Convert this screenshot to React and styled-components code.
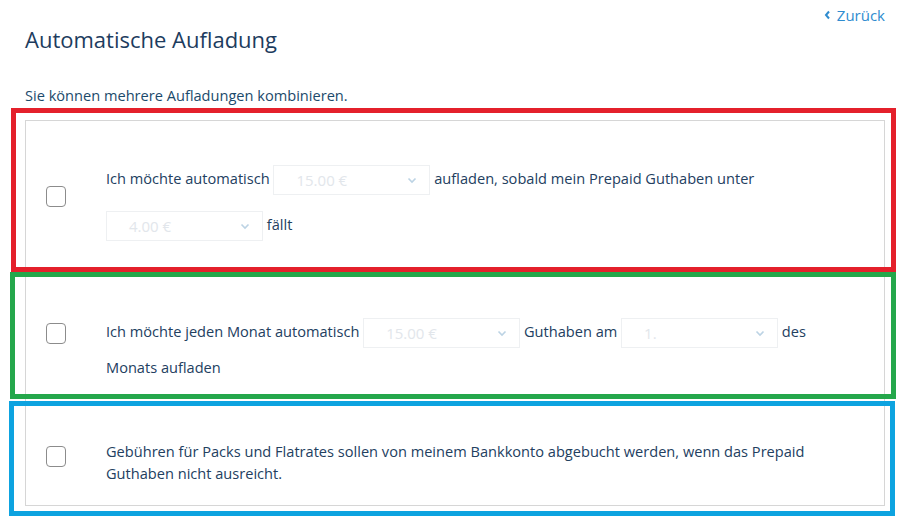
import React from 'react';
import styled, { createGlobalStyle } from 'styled-components';

const GlobalStyle = createGlobalStyle`
  body {
    margin: 0;
    background: #fff;
    font-family: "Open Sans", "Noto Sans", Arial, sans-serif;
  }
`;

const Page = styled.div`
  width: 907px;
  min-height: 521px;
  padding: 5px 22px 0 25px;
  box-sizing: border-box;
`;

const Header = styled.div`
  display: flex;
  justify-content: space-between;
  align-items: flex-start;
`;

const Title = styled.h1`
  margin: 19px 0 0;
  font-size: 22px;
  line-height: 30px;
  font-weight: 400;
  color: #1d3c5e;
`;

const BackLink = styled.a`
  display: flex;
  align-items: center;
  gap: 6px;
  font-size: 15px;
  line-height: 20px;
  color: #2f8ccf;
  text-decoration: none;
`;

const Intro = styled.p`
  margin: 31px 0 0;
  font-size: 14.6px;
  line-height: 20px;
  color: #1b4a6b;
`;

const Card = styled.div`
  margin-top: 15px;
  border: 1px solid #d6d6d6;
`;

const Row = styled.div`
  position: relative;
  display: flex;
  align-items: center;
  padding: ${p => p.$padTop}px 56px 21px 20px;
`;

const Frame = styled.div`
  position: absolute;
  top: ${p => p.$t}px;
  bottom: ${p => p.$b}px;
  left: ${p => p.$l}px;
  right: ${p => p.$r}px;
  border: 5px solid ${p => p.$color};
  pointer-events: none;
`;

const Box = styled.span`
  flex: none;
  width: 18px;
  height: 19px;
  border: 1.5px solid #8c8c8c;
  border-radius: 4px;
  margin: ${p => p.$shift}px 40px 0 0;
`;

const Text = styled.div`
  font-size: 14.6px;
  line-height: 22px;
  color: #23405f;
`;

const Select = styled.span`
  display: inline-flex;
  align-items: center;
  justify-content: space-between;
  box-sizing: border-box;
  width: 157px;
  height: 30px;
  margin: 8px 0;
  padding: 0 12px 0 22px;
  vertical-align: middle;
  border: 1px solid #eef0f2;
  color: #e2e6eb;
  font-size: 15px;
`;

const Chevron = ({ size = 10, color = '#bcd3e4', width = 1.6 }) => (
  <svg width={size} height={size} viewBox="0 0 10 10">
    <path d="M1.5 3.5 L5 7 L8.5 3.5" fill="none" stroke={color} strokeWidth={width} />
  </svg>
);

const Dropdown = ({ value }) => (
  <Select>
    {value}
    <Chevron />
  </Select>
);

const rows = [
  {
    color: '#e4202b',
    pad: 36,
    shift: -14,
    frame: { t: -13, b: -2, l: -15, r: -12 },
    body: (
      <>
        Ich möchte automatisch <Dropdown value="15.00 €" /> aufladen, sobald mein Prepaid Guthaben unter{' '}
        <Dropdown value="4.00 €" /> fällt
      </>
    ),
  },
  {
    color: '#24a74b',
    pad: 40,
    shift: -22,
    frame: { t: 2, b: 0, l: -16, r: -12 },
    body: (
      <>
        Ich möchte jeden Monat automatisch <Dropdown value="15.00 €" /> Guthaben am{' '}
        <Dropdown value="1." /> des Monats aufladen
      </>
    ),
  },
  {
    color: '#0da3e0',
    pad: 41,
    shift: -12,
    frame: { t: 2, b: -11, l: -17, r: -11 },
    body: (
      <>
        Gebühren für Packs und Flatrates sollen von meinem Bankkonto abgebucht werden, wenn das Prepaid
        Guthaben nicht ausreicht.
      </>
    ),
  },
];

const App = () => (
  <>
    <GlobalStyle />
    <Page>
      <Header>
        <Title>Automatische Aufladung</Title>
        <BackLink href="#">
          <svg width="7" height="10" viewBox="0 0 7 10">
            <path d="M5 1.5 L2 5 L5 8.5" fill="none" stroke="#2f8ccf" strokeWidth="2" />
          </svg>
          Zurück
        </BackLink>
      </Header>
      <Intro>Sie können mehrere Aufladungen kombinieren.</Intro>
      <Card>
        {rows.map((r, i) => (
          <Row key={i} $padTop={r.pad}>
            <Box $shift={r.shift} />
            <Text>{r.body}</Text>
            <Frame $color={r.color} $t={r.frame.t} $b={r.frame.b} $l={r.frame.l} $r={r.frame.r} />
          </Row>
        ))}
      </Card>
    </Page>
  </>
);

export default App;
